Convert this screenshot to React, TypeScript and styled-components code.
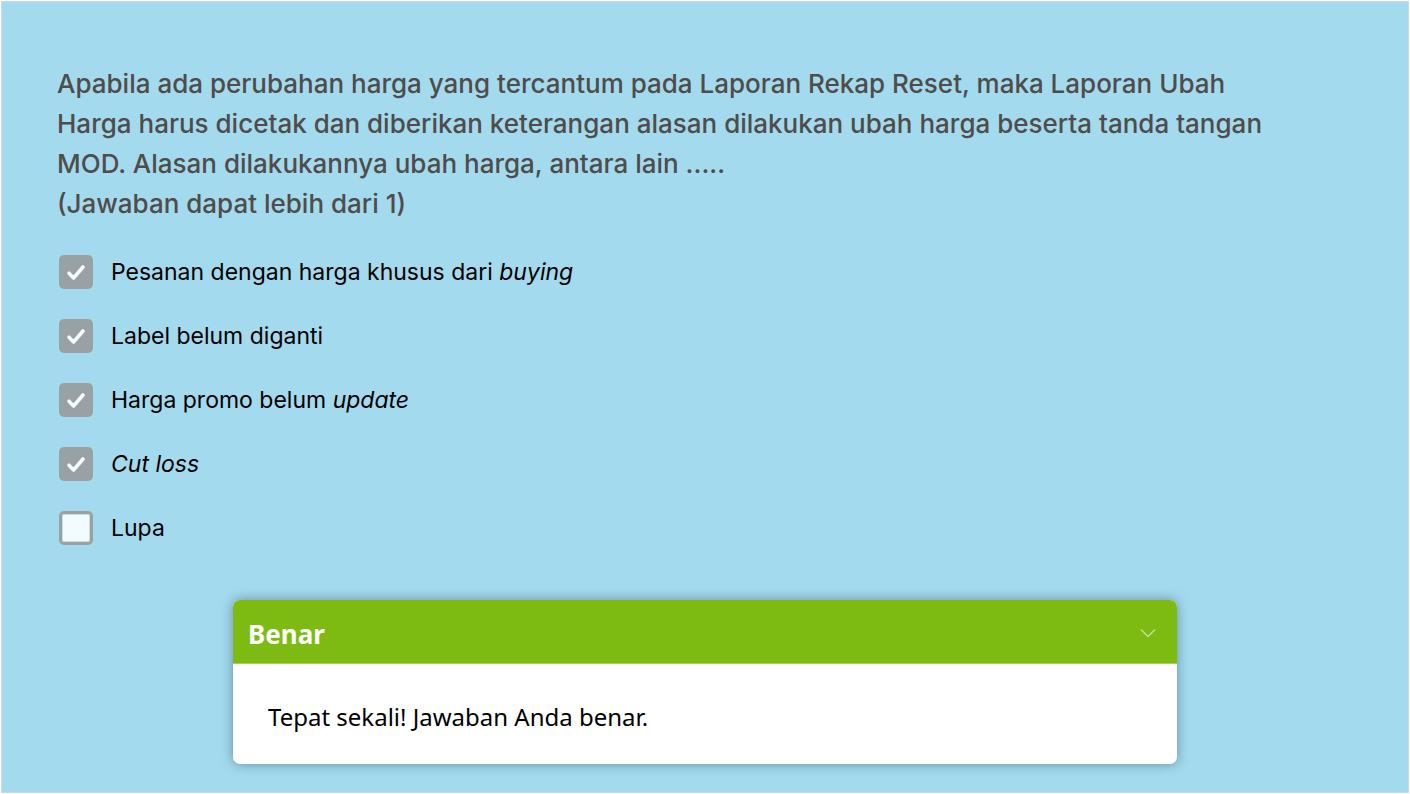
import React from "react";
import styled, { createGlobalStyle } from "styled-components";

const GlobalStyle = createGlobalStyle`
  * { box-sizing: border-box; }
  html, body { margin: 0; background: #ffffff; }
  button, input { font: inherit; margin: 0; padding: 0; }
`;

const Page = styled.div`
  min-height: 100vh;
  padding: 1px;
  display: flex;
`;

const Slide = styled.main`
  flex: 1;
  display: flex;
  flex-direction: column;
  padding: 62px 55px 28px;
  border: 1px solid #c9dbe2;
  background: #a3daee;
  font-family: Inter, "Liberation Sans", sans-serif;
`;

const Question = styled.legend`
  max-width: 1240px;
  padding: 0;
  margin-bottom: 31px;
  font-size: 26px;
  line-height: 40px;
  font-weight: 500;
  color: #4f4c4a;
`;

const Quiz = styled.fieldset`
  margin: 0;
  padding: 0;
  border: 0;
`;

const Options = styled.div`
  display: flex;
  flex-direction: column;
  gap: 30px;
  padding-left: 2px;
`;

const Option = styled.label`
  display: flex;
  align-items: center;
  gap: 18px;
  height: 34px;
  font-size: 23px;
  line-height: 32px;
  color: #000000;
`;

const CheckHolder = styled.span`
  display: grid;
  width: 34px;
  height: 34px;

  & > * { grid-area: 1 / 1; }
`;

const Box = styled.input`
  appearance: none;
  width: 34px;
  height: 34px;
  border: 3px solid #9aa1a4;
  border-radius: 5px;
  background: #f2fbfe;
  box-shadow: inset 0 0 0 1px #d3dadd;

  &:checked {
    background: #9aa1a4;
    box-shadow: none;
  }
`;

const Mark = styled.svg`
  pointer-events: none;
`;

const Feedback = styled.section`
  width: 100%;
  max-width: 944px;
  margin: auto auto 0;
  border-radius: 7px;
  overflow: hidden;
  background: #ffffff;
  box-shadow: 0 0 12px rgba(50, 80, 95, 0.55);
  font-family: "Noto Sans", sans-serif;
`;

const FeedbackHeader = styled.header`
  display: flex;
  align-items: center;
  justify-content: space-between;
  height: 64px;
  padding: 4px 20px 0 15px;
  border-bottom: 1px solid #a5cf5c;
  background: #7dba12;
`;

const FeedbackTitle = styled.h2`
  margin: 0;
  font-size: 26px;
  line-height: 36px;
  font-weight: 700;
  color: #ffffff;
`;

const Collapse = styled.button`
  display: flex;
  padding: 4px 1px 6px;
  border: 0;
  background: none;
  color: #c5e297;
`;

const FeedbackText = styled.p`
  margin: 0;
  padding: 36px 35px 30px;
  font-size: 24px;
  line-height: 34px;
  color: #000000;
`;

const answers: { id: string; checked: boolean; text: React.ReactNode }[] = [
  { id: "pesanan", checked: true, text: <>Pesanan dengan harga khusus dari <em>buying</em></> },
  { id: "label", checked: true, text: "Label belum diganti" },
  { id: "promo", checked: true, text: <>Harga promo belum <em>update</em></> },
  { id: "cutloss", checked: true, text: <em>Cut loss</em> },
  { id: "lupa", checked: false, text: "Lupa" },
];

export default function App() {
  const [selected, setSelected] = React.useState(
    answers.filter((a) => a.checked).map((a) => a.id)
  );
  const [open, setOpen] = React.useState(true);
  const toggle = (id: string) =>
    setSelected((s) => (s.includes(id) ? s.filter((x) => x !== id) : [...s, id]));

  return (
    <Page>
      <GlobalStyle />
      <Slide>
        <Quiz>
          <Question>
            Apabila ada perubahan harga yang tercantum pada Laporan Rekap Reset, maka Laporan Ubah
            <br />
            Harga harus dicetak dan diberikan keterangan alasan dilakukan ubah harga beserta tanda tangan
            <br />
            MOD. Alasan dilakukannya ubah harga, antara lain .....
            <br />
            (Jawaban dapat lebih dari 1)
          </Question>
          <Options>
            {answers.map((a) => (
              <Option key={a.id} htmlFor={a.id}>
                <CheckHolder>
                  <Box
                    id={a.id}
                    type="checkbox"
                    checked={selected.includes(a.id)}
                    onChange={() => toggle(a.id)}
                  />
                  {selected.includes(a.id) && (
                    <Mark width="34" height="34" viewBox="0 0 34 34" fill="none" aria-hidden="true">
                      <path
                        d="M10 18.2 L14.6 23 L24 12"
                        stroke="#f2fbfe"
                        strokeWidth="3.6"
                        strokeLinecap="round"
                        strokeLinejoin="round"
                      />
                    </Mark>
                  )}
                </CheckHolder>
                <span>{a.text}</span>
              </Option>
            ))}
          </Options>
        </Quiz>
        <Feedback>
          <FeedbackHeader>
            <FeedbackTitle>Benar</FeedbackTitle>
            <Collapse
              type="button"
              aria-label="Tutup umpan balik"
              aria-expanded={open}
              onClick={() => setOpen(!open)}
            >
              <svg width="16" height="10" viewBox="0 0 16 10" fill="none" aria-hidden="true">
                <path d="M1 1.5 L8 8.5 L15 1.5" stroke="currentColor" strokeWidth="1.4" />
              </svg>
            </Collapse>
          </FeedbackHeader>
          {open && <FeedbackText>Tepat sekali! Jawaban Anda benar.</FeedbackText>}
        </Feedback>
      </Slide>
    </Page>
  );
}
